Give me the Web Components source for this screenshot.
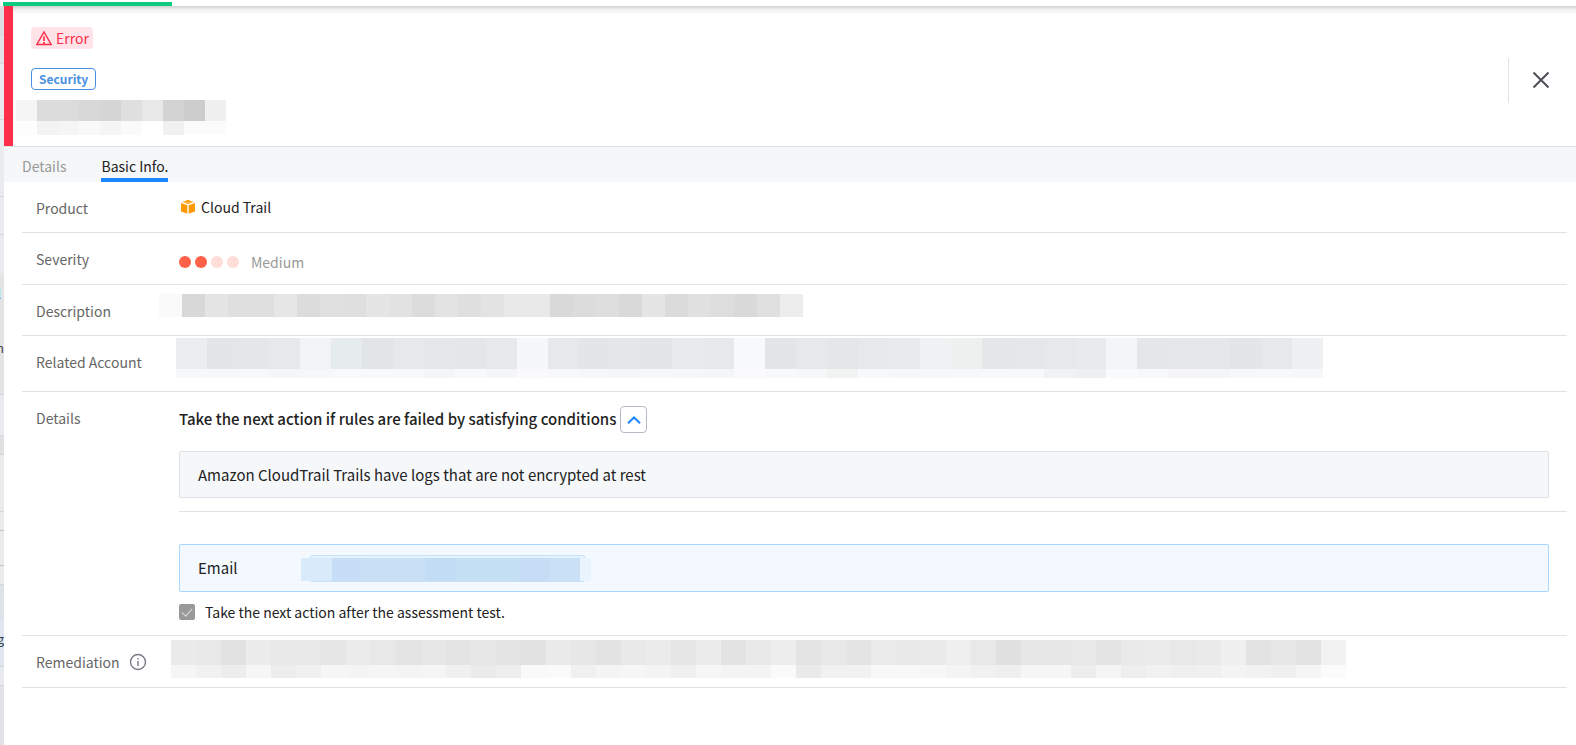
<!DOCTYPE html>
<html lang="en">
<head>
<meta charset="utf-8">
<title>Basic Info.</title>
<style>
  html, body { margin: 0; min-height: 100%; }
  body {
    background: #fff;
    color: #222;
    font: 14px/22px "Noto Sans CJK KR", "Noto Sans", sans-serif;
  }
</style>
</head>
<body>
<finding-page></finding-page>

<script>
const define = (name, html, setup) => {
  const template = document.createElement('template');
  template.innerHTML = html;
  customElements.define(name, class extends HTMLElement {
    constructor() {
      super();
      this.attachShadow({ mode: 'open' }).append(template.content.cloneNode(true));
    }
    connectedCallback() { if (setup) setup(this, this.shadowRoot); }
  });
};

/* Masked value: rows of colour cells. cells="aa bb ..|..", cell and heights in px. */
define('masked-value', `
  <style>
    :host { display: block; }
    div { display: flex; }
    i { flex: none; width: var(--cell); height: 100%; }
  </style>`, (host, root) => {
  if (root.querySelector('div')) return;
  host.style.setProperty('--cell', host.getAttribute('cell') + 'px');
  const heights = host.getAttribute('heights').split(' ');
  host.getAttribute('cells').trim().split('|').forEach((line, n) => {
    const row = document.createElement('div');
    row.style.height = heights[n] + 'px';
    line.trim().split(/\s+/).forEach(c => {
      const cell = document.createElement('i');
      cell.style.background = '#' + (c.length === 2 ? c + c + c : c);
      row.append(cell);
    });
    root.append(row);
  });
});

define('load-bar', `
  <style>
    :host { display: block; height: 4px; padding: 2px 0 0 3px; background: #fff; }
    div { width: 169px; height: 4px; background: #0ecb81; }
  </style>
  <div role="progressbar" aria-label="Loading"></div>`);

/* Sliver of the list that stays visible beside the panel. */
define('list-edge', `
  <style>
    :host {
      display: block; position: relative; overflow: hidden; width: 4px; flex: none;
      --l: #d6d7dc;
      background: linear-gradient(
        #dddee1 0 29px, var(--l) 29px 30px, #e1e2e7 30px 57px, var(--l) 57px 58px,
        #e8eaee 58px 113px, var(--l) 113px 114px, #eaebee 114px 190px, var(--l) 190px 191px,
        #eaebee 191px 228px, var(--l) 228px 229px, #eaebee 229px 269px, #e3e4e6 269px 388px,
        var(--l) 388px 389px, #eaebee 389px 429px, var(--l) 429px 430px, #e1e1e3 430px 448px,
        var(--l) 448px 449px, #ebebee 449px 505px, var(--l) 505px 506px, #ebebee 506px 524px,
        #c4c5cd 524px 525px, #ebebee 525px 559px, #c4c5cd 559px 560px, #ebebee 560px 578px,
        var(--l) 578px 579px, #e0e2ea 579px 614px, #dfe6ef 614px 660px, var(--l) 660px 661px,
        #e9eaed 661px 679px, var(--l) 679px 680px, #e1e2e5 680px);
    }
    span { position: absolute; right: 0; font-size: 13px; color: #444; }
    .a { top: 331px; }
    .b { top: 622px; text-decoration: underline; color: #345; }
    .mark { top: 282px; right: auto; left: 0; width: 1px; height: 10px; background: #bfe6ee; border-bottom: 1px solid #6a9fd0; }
  </style>
  <span class="mark"></span><span class="a">m</span><span class="b">g</span>`);

define('status-badge', `
  <style>
    :host {
      display: inline-flex; align-items: center; gap: 4px; box-sizing: border-box;
      height: 22px; padding: 0 4px 0 5px; border-radius: 4px;
      background: #ffe3e8; color: #fe2d49;
    }
    svg { display: block; }
  </style>
  <svg width="16" height="16" viewBox="0 0 16 16" fill="none" stroke="currentColor" aria-hidden="true">
    <path d="M8 2 L15.2 14.5 H.8 Z" stroke-width="1.500"/>
    <path d="M8 6.5 V11 M8 12 V14" stroke-width="1.700"/>
  </svg>
  <slot></slot>`);

define('category-tag', `
  <style>
    :host {
      display: inline-block; box-sizing: border-box; height: 22px; padding: 0 7px;
      border: 1px solid #4a90e2; border-radius: 4px; background: #fff;
      color: #4a90e2; font-size: 12px; line-height: 20px; font-weight: 700;
    }
  </style>
  <slot></slot>`);

define('panel-header', `
  <style>
    :host {
      display: flex; align-items: flex-start; justify-content: space-between;
      box-sizing: border-box; height: 140px; border-left: 9px solid #fe2d49;
      background: linear-gradient(#d2d2d2, #f2f2f2 4px, #fff 9px);
    }
    .info { display: flex; flex-direction: column; align-items: flex-start; padding: 21px 0 0 18px; }
    .tag { display: flex; margin-top: 19px; }
    .name { margin: 10px 0 0 -15px; }
    .close { margin-top: 52px; height: 45px; border-left: 1px solid #e1e3ea; }
    button { display: grid; place-items: center; width: 64px; height: 44px; margin-right: 3px; padding: 0; border: 0; background: none; color: #4c4f57; }
  </style>
  <div class="info">
    <slot name="status"></slot>
    <div class="tag"><slot name="tag"></slot></div>
    <div class="name"><slot name="name"></slot></div>
  </div>
  <div class="close">
    <button type="button" aria-label="Close">
      <svg width="18" height="18" viewBox="0 0 18 18" fill="none" stroke="currentColor" stroke-width="2"><path d="M1.5 1.5 L16.5 16.5 M16.5 1.5 L1.5 16.5"/></svg>
    </button>
  </div>`);

define('tab-bar', `
  <style>
    :host { display: block; background: #f5f7f9; border-top: 1px solid #dfe3e8; }
    nav { display: flex; gap: 35px; padding-left: 18px; height: 35px; }
    a { display: block; box-sizing: border-box; padding-top: 8px; height: 35px; color: #999; text-decoration: none; }
    a[aria-current] { color: #222; border-bottom: 4px solid #1a86ff; }
  </style>
  <nav><a href="#details">Details</a><a href="#basic" aria-current="page">Basic Info.</a></nav>`);

define('info-row', `
  <style>
    :host {
      display: grid; grid-template-columns: 143px minmax(0, 1fr);
      box-sizing: border-box; min-height: 51px; margin: 0 9px 0 18px; padding-left: 14px;
      border-bottom: 1px solid #dfe1e5;
    }
    .label { display: flex; align-items: center; align-self: start; gap: 9px; padding-top: 15px; color: #666; }
  </style>
  <div class="label"><slot name="label"></slot></div>
  <div><slot></slot></div>`);

define('product-name', `
  <style>
    :host { display: flex; align-items: center; gap: 5px; padding-top: 14px; }
    svg { margin-left: 1px; }
  </style>
  <svg width="16" height="16" viewBox="0 0 16 16" aria-hidden="true">
    <path d="M8 1 L14 3 L8 5.2 L2 3 Z" fill="#ffb84d"/>
    <path d="M4.5 2.2 L8 1 L11.500 2.200 L8 3.300 Z" fill="#ff9900"/>
    <path d="M1 4 L7.300 6.300 V14.800 L1 12.500 Z M15 4 L8.700 6.300 V14.800 L15 12.500 Z" fill="#ff9900"/>
  </svg>
  <slot></slot>`);

define('severity-level', `
  <style>
    :host { display: flex; align-items: center; padding-top: 18px; color: #999; }
    .dots { display: flex; gap: 4px; margin-right: 12px; }
    i { width: 12px; height: 12px; border-radius: 50%; background: #ffdeda; }
    i.on { background: #ff6048; }
  </style>
  <div class="dots"></div><slot></slot>`, (host, root) => {
  const level = Number(host.getAttribute('level'));
  root.querySelector('.dots').innerHTML =
    [1, 2, 3, 4].map(n => `<i class="${n <= level ? 'on' : ''}"></i>`).join('');
});

define('info-icon', `
  <style>:host { display: block; height: 18px; color: #777b85; }</style>
  <svg width="18" height="18" viewBox="0 0 18 18" fill="none" stroke="currentColor" role="img" aria-label="Information">
    <circle cx="9" cy="9" r="7.500" stroke-width="1.400"/>
    <path d="M9 8 V13 M9 5 V6.500" stroke-width="1.400"/>
  </svg>`);

define('action-details', `
  <style>
    :host { display: block; height: 243px; }
    .head { display: flex; align-items: center; gap: 4px; padding-top: 14px; }
    h2 { margin: 0 0 2px; font-size: 15px; line-height: 22px; font-weight: 500; }
    button { display: grid; place-items: center; box-sizing: border-box; width: 27px; height: 27px; padding: 0; border: 1px solid #b5bac5; border-radius: 4px; background: #fff; color: #1a86ff; }
    .box { display: flex; align-items: center; box-sizing: border-box; height: 47px; margin: 18px 18px 0 0; padding-left: 18px; border: 1px solid #dfe1e8; border-radius: 2px; background: #f5f7f9; font-size: 15px; }
    hr { margin: 13px 0 32px; border: 0; border-top: 1px solid #dfe1e5; }
    .mail { height: 48px; margin-top: 0; border-color: #a6d8ff; background: #f4f9ff; }
    .mail span { width: 103px; }
    .chip { box-sizing: border-box; width: 290px; height: 27px; position: relative; }
    .chip::before { content: ""; box-sizing: border-box; position: absolute; left: 9px; top: 0; width: 275px; height: 27px; border: 1px solid #c5e1fa; border-radius: 2px; background: #e5f3ff; }
    .chip masked-value { position: relative; padding-top: 3px; width: 290px; height: 23px; overflow: hidden; }
    label { display: flex; align-items: center; gap: 10px; margin-top: 9px; }
    input { appearance: none; box-sizing: border-box; display: grid; place-items: center; width: 16px; height: 16px; margin: 0; border-radius: 2px; background: #999; }
    input::after { content: ""; width: 5px; height: 9px; margin-top: -3px; border: solid #ddd; border-width: 0 1px 1px 0; transform: rotate(42deg); }
  </style>
  <div class="head">
    <h2>Take the next action if rules are failed by satisfying conditions</h2>
    <button type="button" aria-label="Collapse" aria-expanded="true">
      <svg width="14" height="8" viewBox="0 0 14 8" fill="none" stroke="currentColor" stroke-width="2"><path d="M1 7.200 L7 1.500 L13 7.200"/></svg>
    </button>
  </div>
  <div class="box">Amazon CloudTrail Trails have logs that are not encrypted at rest</div>
  <hr>
  <div class="box mail"><span>Email</span>
    <div class="chip"><masked-value cell="31" heights="23" cells="d9eafb c7def6 c8dff6 c8dff6 c2dcf4 c5dff4 c5dff4 c7ddf5 cae0f7 eaf4ff"></masked-value></div>
  </div>
  <label><input type="checkbox" checked disabled>Take the next action after the assessment test.</label>`);

define('finding-page', `
  <style>
    :host { display: flex; flex-direction: column; min-height: 100vh; }
    .body { display: flex; flex: 1; }
    main { flex: 1; min-width: 0; background: #fff; }
    .severity { min-height: 52px; }
    .account { min-height: 56px; }
    .remedy { min-height: 52px; }
    .m-desc { margin: 9px 0 0 -20px; }
    .m-account { margin: 2px 0 0 -3px; }
    .m-remedy { margin: 4px 0 0 -8px; }
  </style>
  <load-bar></load-bar>
  <div class="body">
    <list-edge aria-hidden="true"></list-edge>
    <main>
      <panel-header>
        <status-badge slot="status">Error</status-badge>
        <category-tag slot="tag">Security</category-tag>
        <masked-value slot="name" cell="21" heights="21 14" cells="f5 dc dc d8 d6 df e8 d3 cd f0|fd f3 f5 f9 f5 fa ff f1 fb fb"></masked-value>
      </panel-header>
      <tab-bar></tab-bar>
      <info-row><span slot="label">Product</span><product-name>Cloud Trail</product-name></info-row>
      <info-row class="severity"><span slot="label">Severity</span><severity-level level="2">Medium</severity-level></info-row>
      <info-row><span slot="label">Description</span>
        <masked-value class="m-desc" cell="23" heights="23" cells="fa d8 e4 df df e6 dc e0 df e5 e2 dc e3 df e3 e9 e9 d9 dc de d9 e5 db e1 dd d9 e0 ed"></masked-value>
      </info-row>
      <info-row class="account"><span slot="label">Related Account</span>
        <masked-value class="m-account" cell="31" heights="31 9" cells="ebedf1 e2e6e8 e3e7ea e7e8eb f2f3f5 e6ebed e1e5e7 e5e9ec e6e7ea e3e7e9 e7e8eb f6f7f9 e5e9eb e2e6e8 e3e7ea e2e6e9 e8eaed e7e8eb f8f9fb e2e6e8 e7e8eb e3e7e9 e5e9ec e8eaed f0f1f3 eeefef e3e7e9 e5e7ea e7e8eb e8eaed f4f5f7 e3e7e9 e6e7ea e6e7ea e2e6e8 e7e8eb eff0f2|f7f8fa f7f8fa f7f8fa f5f6f8 f6f7f9 f8f9fb f8f9fb f7f8fa f4f5f6 f8f9fb f5f6f8 fafafc f7f8fa f6f7f8 f5f6f8 f7f8fa f6f7fa f5f6f8 fafafc f8f9fb f6f7f9 f1f2f2 f8f9fb f6f7f9 f6f7f9 f7f8fa f7f8fa f7f8fa f1f2f3 eeeff3 f9fafc f7f8fa f5f5f7 f4f5f7 f7f8fa f7f8fa f6f7f9"></masked-value>
      </info-row>
      <info-row><span slot="label">Details</span><action-details></action-details></info-row>
      <info-row class="remedy"><span slot="label">Remediation</span><info-icon slot="label"></info-icon>
        <masked-value class="m-remedy" cell="25" heights="25 13" cells="ea e9 e2 ec e9 e8 e6 eb e8 e4 e7 e4 e7 e4 e2 ea e7 e3 e9 eb e6 eb e3 e9 ed e4 e8 e4 eb e8 ea ef e8 e1 e7 e7 e8 e4 ea eb e8 ea f0 e3 e7 e3 f2|f5 f1 ed f6 ed f0 f6 f4 f5 f4 f5 f0 eb ee f9 fa f0 f4 f6 f4 f0 f6 f4 f4 fa ea f1 f1 f8 f8 f7 f4 f1 ef f6 f6 ed f5 ee f1 ef f0 f4 f2 ef f5 fb"></masked-value>
      </info-row>
    </main>
  </div>`);
</script>
</body>
</html>
